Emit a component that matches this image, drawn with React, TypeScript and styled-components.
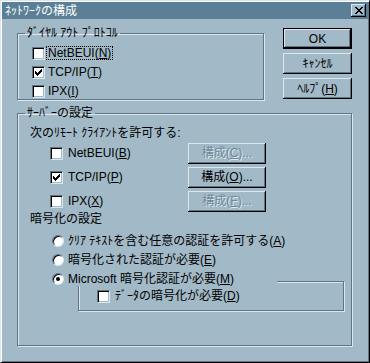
import React from 'react'
import styled, { createGlobalStyle } from 'styled-components'

const FACE = '#a2b9c7'
const LIGHT = '#dce7ed'
const SHADOW = '#5d7585'
const TITLE = '#5a7f96'
const DISABLED = '#6e8999'
const FONT = `"Liberation Sans", "Noto Sans CJK JP", sans-serif`

const GlobalStyle = createGlobalStyle`
  html, body {
    margin: 0;
    padding: 0;
    background: ${FACE};
  }
  body {
    font-family: ${FONT};
    font-size: 12px;
    color: #000;
  }
`

const Dialog = styled.div`
  width: 370px;
  height: 363px;
  box-sizing: border-box;
  background: ${FACE};
  border: 1px solid;
  border-color: ${LIGHT} #000 #000 ${LIGHT};
  box-shadow: inset 1px 1px 0 #fff, inset -1px -1px 0 ${SHADOW};
  padding: 1px;
  display: flex;
  flex-direction: column;
`

const TitleBar = styled.div`
  height: 17px;
  flex: none;
  background: ${TITLE};
  color: #fff;
  display: flex;
  align-items: center;
  justify-content: space-between;
  padding: 0 2px 0 3px;
  line-height: 14px;
`

const CloseButton = styled.div`
  width: 15px;
  height: 13px;
  box-sizing: border-box;
  background: ${FACE};
  display: grid;
  place-items: center;
  box-shadow: inset -1px -1px 0 #000, inset 1px 1px 0 ${LIGHT}, inset -2px -2px 0 ${SHADOW};
`

const Content = styled.div`
  flex: 1;
  padding: 0 16px 0 15px;
`

const TopRow = styled.div`
  display: flex;
  justify-content: space-between;
  align-items: flex-start;
`

const Group = styled.fieldset<{ $w?: number; $h: number; $top: number }>`
  margin: ${p => p.$top}px 0 0 0;
  padding: 0;
  min-width: 0;
  box-sizing: border-box;
  width: ${p => (p.$w ? `${p.$w}px` : 'auto')};
  height: ${p => p.$h}px;
  border: 1px solid ${SHADOW};
  box-shadow: inset 1px 1px 0 ${LIGHT}, 1px 1px 0 ${LIGHT};
`

const Legend = styled.legend`
  margin-left: 7px;
  padding: 0 2px;
  line-height: 14px;
  height: 14px;
`

const GroupBody = styled.div<{ $top: number; $left: number }>`
  padding: ${p => p.$top}px 0 0 ${p => p.$left}px;
  display: flex;
  flex-direction: column;
`

const ButtonColumn = styled.div`
  width: 69px;
  margin-top: 9px;
  display: flex;
  flex-direction: column;
  gap: 4px;
`

const PushButton = styled.button<{ $isDefault?: boolean; $w?: number }>`
  font-family: ${FONT};
  font-size: 12px;
  width: ${p => (p.$w ? `${p.$w}px` : '100%')};
  height: 21px;
  padding: 0;
  box-sizing: border-box;
  background: ${FACE};
  color: #000;
  border: ${p => (p.$isDefault ? '1px solid #000' : 'none')};
  box-shadow: inset -1px -1px 0 #000, inset 1px 1px 0 ${LIGHT}, inset -2px -2px 0 ${SHADOW};
  line-height: 14px;

  &:disabled {
    color: ${DISABLED};
    text-shadow: 1px 1px 0 ${LIGHT};
  }
`

const CheckRow = styled.div<{ $gap: number }>`
  display: flex;
  align-items: center;
  gap: ${p => p.$gap}px;
  height: 14px;
  line-height: 14px;
`

const CheckList = styled.div<{ $gap: number; $top: number; $left: number }>`
  display: flex;
  flex-direction: column;
  gap: ${p => p.$gap}px;
  margin: ${p => p.$top}px 0 0 ${p => p.$left}px;
`

const Box = styled.span`
  width: 13px;
  height: 13px;
  flex: none;
  box-sizing: border-box;
  background: #fff;
  border: 1px solid;
  border-color: ${SHADOW} ${LIGHT} ${LIGHT} ${SHADOW};
  box-shadow: inset 1px 1px 0 #000, inset -1px -1px 0 ${FACE};
  display: grid;
  place-items: center;
`

const FocusLabel = styled.span`
  padding: 0 2px;
  outline: 1px dotted #000;
  outline-offset: -1px;
`

const Caption = styled.div<{ $top: number }>`
  margin-top: ${p => p.$top}px;
  line-height: 14px;
  height: 14px;
`

const ClientRow = styled.div`
  display: grid;
  grid-template-columns: 138px 78px;
  align-items: center;
  height: 22px;
`

const RadioRow = styled.div<{ $cover?: boolean }>`
  display: flex;
  align-items: center;
  gap: 4px;
  height: 14px;
  line-height: 14px;
  position: ${p => (p.$cover ? 'relative' : 'static')};
  z-index: 1;
  background: ${FACE};
  width: ${p => (p.$cover ? '225px' : 'auto')};
`

const RadioDot = styled.span<{ $on?: boolean }>`
  width: 12px;
  height: 12px;
  flex: none;
  box-sizing: border-box;
  border-radius: 50%;
  background: #fff;
  border: 1px solid;
  border-color: ${SHADOW} ${LIGHT} ${LIGHT} ${SHADOW};
  box-shadow: inset 1px 1px 0 #000;
  display: grid;
  place-items: center;

  &::after {
    content: '';
    width: 4px;
    height: 4px;
    border-radius: 50%;
    background: ${p => (p.$on ? '#000' : 'transparent')};
  }
`

const SubFrame = styled.div`
  margin: -5px 0 0 48px;
  width: 266px;
  height: 30px;
  box-sizing: border-box;
  border: 1px solid ${SHADOW};
  box-shadow: inset 1px 1px 0 ${LIGHT}, 1px 1px 0 ${LIGHT};
  padding: 7px 0 0 18px;
`

const Check = () => (
  <svg width="7" height="7" viewBox="0 0 7 7" shapeRendering="crispEdges">
    <path d="M0 2h1v1h1v1h1V3h1V2h1V1h1V0h1v3H6v1H5v1H4v1H3v1H2V6H1V5H0z" fill="#000" />
  </svg>
)

const CloseX = () => (
  <svg width="8" height="7" viewBox="0 0 8 7" shapeRendering="crispEdges">
    <path d="M0 0h2v1h1v1h2V1h1V0h2v1H7v1H6v1H5v1h1v1h1v1h1v1H6V6H5V5H3v1H2v1H0V6h1V5h1V4h1V3H2V2H1V1H0z" fill="#000" />
  </svg>
)

const CheckBox: React.FC<{ checked?: boolean }> = ({ checked }) => <Box>{checked && <Check />}</Box>

const clients = [
  { name: 'NetBEUI', key: 'B', cfg: 'C', checked: false },
  { name: 'TCP/IP', key: 'P', cfg: 'O', checked: true },
  { name: 'IPX', key: 'X', cfg: 'F', checked: false },
]

export default function App() {
  return (
    <>
      <GlobalStyle />
      <Dialog>
        <TitleBar>
          <span>ﾈｯﾄﾜｰｸの構成</span>
          <CloseButton>
            <CloseX />
          </CloseButton>
        </TitleBar>
        <Content>
          <TopRow>
            <Group $w={247} $h={74} $top={7}>
              <Legend>ﾀﾞｲﾔﾙ ｱｳﾄ ﾌﾟﾛﾄｺﾙ</Legend>
              <GroupBody $top={6} $left={14}>
                <CheckList $gap={5} $top={0} $left={0}>
                  <CheckRow $gap={1}>
                    <CheckBox />
                    <FocusLabel>
                      NetBEUI(<u>N</u>)
                    </FocusLabel>
                  </CheckRow>
                  <CheckRow $gap={3}>
                    <CheckBox checked />
                    <span>
                      TCP/IP(<u>T</u>)
                    </span>
                  </CheckRow>
                  <CheckRow $gap={3}>
                    <CheckBox />
                    <span>
                      IPX(<u>I</u>)
                    </span>
                  </CheckRow>
                </CheckList>
              </GroupBody>
            </Group>
            <ButtonColumn>
              <PushButton $isDefault>OK</PushButton>
              <PushButton>ｷｬﾝｾﾙ</PushButton>
              <PushButton>
                ﾍﾙﾌﾟ(<u>H</u>)
              </PushButton>
            </ButtonColumn>
          </TopRow>

          <Group $h={240} $top={6}>
            <Legend>ｻｰﾊﾞｰの設定</Legend>
            <GroupBody $top={6} $left={12}>
              <Caption $top={0}>次のﾘﾓｰﾄ ｸﾗｲｱﾝﾄを許可する:</Caption>
              <CheckList $gap={2} $top={2} $left={20}>
                {clients.map(c => (
                  <ClientRow key={c.name}>
                    <CheckRow $gap={5}>
                      <CheckBox checked={c.checked} />
                      <span>
                        {c.name}(<u>{c.key}</u>)
                      </span>
                    </CheckRow>
                    <PushButton $w={78} disabled={!c.checked}>
                      構成(<u>{c.cfg}</u>)...
                    </PushButton>
                  </ClientRow>
                ))}
              </CheckList>
              <Caption $top={0}>暗号化の設定</Caption>
              <CheckList $gap={5} $top={8} $left={22}>
                <RadioRow>
                  <RadioDot />
                  <span>
                    ｸﾘｱ ﾃｷｽﾄを含む任意の認証を許可する(<u>A</u>)
                  </span>
                </RadioRow>
                <RadioRow>
                  <RadioDot />
                  <span>
                    暗号化された認証が必要(<u>E</u>)
                  </span>
                </RadioRow>
                <RadioRow $cover>
                  <RadioDot $on />
                  <span>
                    Microsoft 暗号化認証が必要(<u>M</u>)
                  </span>
                </RadioRow>
              </CheckList>
              <SubFrame>
                <CheckRow $gap={5}>
                  <CheckBox />
                  <span>
                    ﾃﾞｰﾀの暗号化が必要(<u>D</u>)
                  </span>
                </CheckRow>
              </SubFrame>
            </GroupBody>
          </Group>
        </Content>
      </Dialog>
    </>
  )
}
